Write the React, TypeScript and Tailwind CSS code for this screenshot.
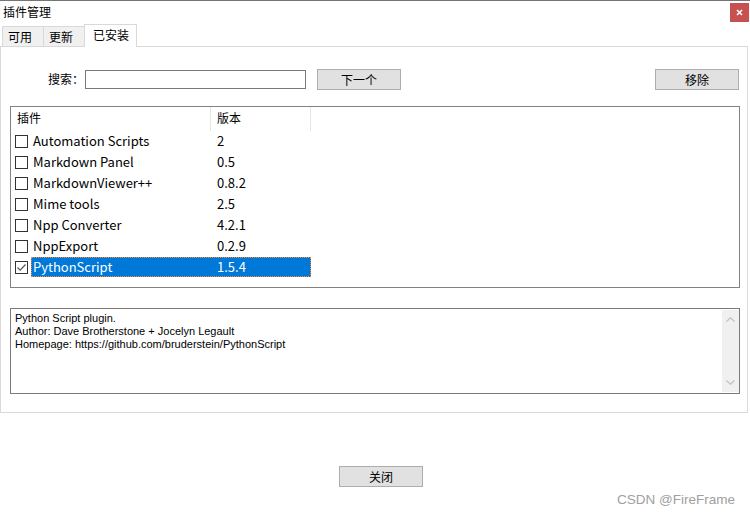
import React from 'react';

const cjk = '"Noto Sans CJK SC", "Liberation Sans", sans-serif';

const plugins = [
  { name: 'Automation Scripts', version: '2', checked: false },
  { name: 'Markdown Panel', version: '0.5', checked: false },
  { name: 'MarkdownViewer++', version: '0.8.2', checked: false },
  { name: 'Mime tools', version: '2.5', checked: false },
  { name: 'Npp Converter', version: '4.2.1', checked: false },
  { name: 'NppExport', version: '0.2.9', checked: false },
  { name: 'PythonScript', version: '1.5.4', checked: true },
];

const WinButton: React.FC<{ label: string; className?: string }> = ({ label, className = '' }) => (
  <button
    type="button"
    className={`w-[84px] h-[21px] bg-[#e1e1e1] border border-[#adadad] text-[12px] leading-[19px] text-black ${className}`}
  >
    {label}
  </button>
);

const Checkbox: React.FC<{ checked: boolean }> = ({ checked }) => (
  <div className="w-[13px] h-[13px] border border-[#333333] bg-white flex items-center justify-center shrink-0">
    {checked && (
      <svg width="11" height="11" viewBox="0 0 11 11">
        <path d="M1.5 5.5 L4.2 8.2 L9.5 2.5" fill="none" stroke="#555555" strokeWidth="1.2" />
      </svg>
    )}
  </div>
);

const App: React.FC = () => {
  return (
    <div
      className="w-[750px] h-[514px] bg-white relative border-t border-[#747474] overflow-hidden"
      style={{ fontFamily: cjk }}
    >
      {/* title bar */}
      <div className="h-[23px] flex items-start justify-between">
        <span className="pl-[3px] pt-[3px] text-[12px] leading-[16px] text-black">插件管理</span>
        <button
          type="button"
          className="mt-[2px] mr-[1px] w-[19px] h-[19px] bg-[#c75050] flex items-center justify-center"
        >
          <svg width="7" height="7" viewBox="0 0 7 7">
            <path d="M1 1 L6 6 M6 1 L1 6" stroke="white" strokeWidth="1.6" />
          </svg>
        </button>
      </div>

      {/* tabs */}
      <div className="flex items-end pl-[2px] h-[22px]">
        <div className="h-[20px] w-[42px] bg-[#f0f0f0] border border-b-0 border-[#d9d9d9] text-[12px] leading-[19px] pl-[5px] text-black">
          可用
        </div>
        <div className="h-[20px] w-[42px] -ml-[1px] bg-[#f0f0f0] border border-b-0 border-[#d9d9d9] text-[12px] leading-[19px] pl-[5px] text-black">
          更新
        </div>
        <div className="relative z-10 h-[23px] w-[53px] -ml-[1px] -mb-[1px] bg-white border border-b-0 border-[#d9d9d9] text-[12px] leading-[19px] pl-[8px] text-black">
          已安装
        </div>
      </div>

      {/* tab panel */}
      <div className="w-[748px] h-[367px] border border-[#d9d9d9] flex flex-col">
        <div className="mt-[22px] h-[20px] flex items-center">
          <span className="ml-[47px] w-[37px] text-[12px] leading-[16px] text-black">搜索：</span>
          <div className="w-[221px] h-[19px] border border-[#7a7a7a] bg-white"></div>
          <WinButton label="下一个" className="ml-[11px]" />
          <WinButton label="移除" className="ml-auto mr-[8px]" />
        </div>

        {/* plugin list */}
        <div className="ml-[9px] mt-[17px] w-[730px] h-[182px] border border-[#828282] bg-white">
          <div className="flex h-[24px] text-[12px] leading-[22px] text-black">
            <div className="w-[200px] pl-[6px] border-r border-[#e5e5e5]">插件</div>
            <div className="w-[100px] pl-[6px] border-r border-[#e5e5e5]">版本</div>
          </div>
          {plugins.map((p) => (
            <div key={p.name} className="h-[21px] flex items-start">
              <div className="pl-[4px] pt-[4px] w-[20px]">
                <Checkbox checked={p.checked} />
              </div>
              <div
                className={`h-[20px] w-[280px] flex text-[13px] leading-[20px] ${
                  p.checked
                    ? 'bg-[#0078d7] text-white outline outline-1 outline-dotted outline-[#ff8728] -outline-offset-1'
                    : 'text-black'
                }`}
              >
                <span className="w-[186px] pl-[2px]">{p.name}</span>
                <span>{p.version}</span>
              </div>
            </div>
          ))}
        </div>

        {/* description */}
        <div className="ml-[9px] mt-[20px] w-[730px] h-[86px] border border-[#7a7a7a] bg-white flex">
          <div
            className="flex-1 pl-[4px] pt-[3px] text-[11px] leading-[13px] text-black"
            style={{ fontFamily: '"Liberation Sans", sans-serif' }}
          >
            <div>Python Script plugin.</div>
            <div>Author: Dave Brotherstone + Jocelyn Legault</div>
            <div>Homepage: https://github.com/bruderstein/PythonScript</div>
          </div>
          <div className="w-[17px] my-[1px] bg-[#f0f0f0] flex flex-col items-center justify-between py-[7px]">
            <svg width="9" height="5" viewBox="0 0 9 5">
              <path d="M0.5 4.5 L4.5 0.8 L8.5 4.5" fill="none" stroke="#c2c2c2" strokeWidth="1.3" />
            </svg>
            <svg width="9" height="5" viewBox="0 0 9 5">
              <path d="M0.5 0.5 L4.5 4.2 L8.5 0.5" fill="none" stroke="#c2c2c2" strokeWidth="1.3" />
            </svg>
          </div>
        </div>
      </div>

      <div className="mt-[53px] pl-[12px] flex justify-center">
        <WinButton label="关闭" />
      </div>

      <div
        className="absolute right-[15px] bottom-[6px] text-[13.5px] leading-[16px] text-[#a0a0a0]"
        style={{ fontFamily: '"Liberation Sans", sans-serif' }}
      >
        CSDN @FireFrame
      </div>
    </div>
  );
};

export default App;
